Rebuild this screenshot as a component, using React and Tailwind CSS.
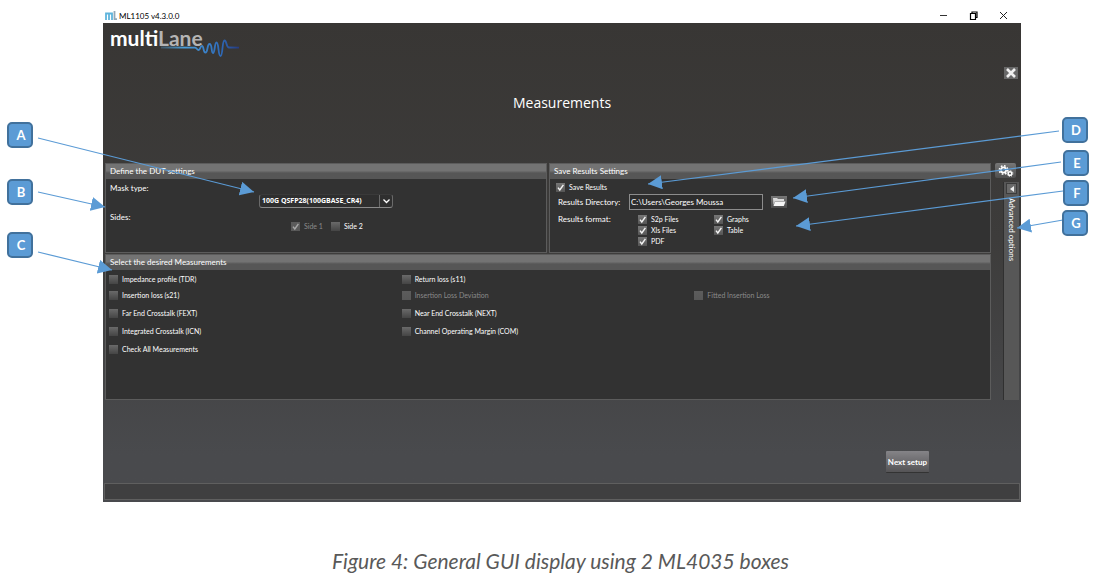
import React, { useState } from 'react';
import clsx from 'clsx';

const MEASUREMENTS = [
  { id: 'tdr', label: 'Impedance profile (TDR)', cell: 'col-start-1 row-start-1' },
  { id: 's21', label: 'Insertion loss (s21)', cell: 'col-start-1 row-start-2' },
  { id: 'fext', label: 'Far End Crosstalk (FEXT)', cell: 'col-start-1 row-start-3' },
  { id: 'icn', label: 'Integrated Crosstalk (ICN)', cell: 'col-start-1 row-start-4' },
  { id: 'all', label: 'Check All Measurements', cell: 'col-start-1 row-start-5' },
  { id: 's11', label: 'Return loss (s11)', cell: 'col-start-2 row-start-1' },
  { id: 'ild', label: 'Insertion Loss Deviation', cell: 'col-start-2 row-start-2', disabled: true },
  { id: 'next', label: 'Near End Crosstalk (NEXT)', cell: 'col-start-2 row-start-3' },
  { id: 'com', label: 'Channel Operating Margin (COM)', cell: 'col-start-2 row-start-4' },
  { id: 'fil', label: 'Fitted Insertion Loss', cell: 'col-start-3 row-start-2', disabled: true },
];

const FORMATS = ['S2p Files', 'Graphs', 'Xls Files', 'Table', 'PDF'];

const CALLOUTS = [
  { letter: 'A', place: 'left-[7px] top-[122px]', from: [38, 138], to: [254, 192] },
  { letter: 'B', place: 'left-[7px] top-[179px]', from: [38, 192], to: [105, 207] },
  { letter: 'C', place: 'left-[7px] top-[232px]', from: [38, 252], to: [112, 270] },
  { letter: 'D', place: 'right-[9px] top-[117px]', from: [1059, 131], to: [648, 184] },
  { letter: 'E', place: 'right-[8px] top-[150px]', from: [1061, 162], to: [793, 198] },
  { letter: 'F', place: 'right-[8px] top-[180px]', from: [1063, 191], to: [796, 226] },
  { letter: 'G', place: 'right-[9px] top-[210px]', from: [1063, 220], to: [1017, 228] },
];

function Check({ label, disabled, defaultChecked, className }) {
  return (
    <label className={clsx('flex items-center gap-1 text-[7px] leading-none whitespace-nowrap', disabled ? 'text-[#8a8a8a]' : 'text-white', className)}>
      <span className="relative flex">
        <input
          type="checkbox"
          disabled={disabled}
          defaultChecked={defaultChecked}
          className="peer size-[9px] appearance-none bg-linear-to-b from-[#6a6a6a] to-[#454545] checked:from-[#777777] checked:to-[#555555] disabled:from-[#5c5c5c] disabled:to-[#585858]"
        />
        <svg viewBox="0 0 9 9" className="pointer-events-none absolute inset-0 hidden size-[9px] peer-checked:block peer-disabled:opacity-50">
          <path d="M2 4.6 L3.8 7 L7.4 1.8" fill="none" stroke="#f4f4f4" strokeWidth="1.4" />
        </svg>
      </span>
      {label}
    </label>
  );
}

function Panel({ title, className, children }) {
  return (
    <section className={clsx('flex flex-col border border-[#5c5c5c] bg-[#323232]', className)}>
      <h2 className="h-[15px] bg-linear-to-b from-[#737373] from-45% to-[#565656] to-60% pl-1 text-[8px] leading-[15px] text-white">
        {title}
      </h2>
      {children}
    </section>
  );
}

function Logo() {
  return (
    <div className="relative w-[132px] text-[21px] leading-[20px] font-bold text-white">
      multi<span className="text-[#b4b4b4]">Lane</span>
      <svg viewBox="0 0 80 20" className="absolute top-[10px] left-[51px] h-5 w-20" fill="none">
        <defs>
          <linearGradient id="wave" gradientUnits="userSpaceOnUse" x1="0" x2="78" y1="0" y2="0">
            <stop offset="0" stopColor="#4c9bd0" stopOpacity="0.3" />
            <stop offset="0.3" stopColor="#4a9dd8" />
            <stop offset="0.75" stopColor="#2f6dbb" />
            <stop offset="1" stopColor="#263b80" />
          </linearGradient>
        </defs>
        <path
          d="M0 9.5 L34 9.6 C36 9.8 36 12 37.5 12 C39.5 12 39 8 41 8 C43 8 42 14.5 44.5 14.5 C47 14.5 46 6 48.5 6 C51.5 6 50 15 52 15 C54 15 53.5 4.5 55.5 4.5 C58 4.5 57 18 59.5 18 C62 18 61 2.5 63.5 2.5 C66 2.5 65 9.5 68 9.5 L78 9.7"
          stroke="url(#wave)"
          strokeWidth="1.8"
        />
      </svg>
    </div>
  );
}

function TitleBar() {
  return (
    <header className="flex h-[15px] items-center bg-white text-black">
      <svg viewBox="0 0 12 9" className="ml-[2px] h-[9px] w-3" fill="none" strokeWidth="1.8">
        <path d="M1 9 V2.5 H4 V9 M4 2.5 H7 V9" stroke="#5fb4dc" />
        <path d="M9.500 0 V8.200 H12" stroke="#93a8b8" />
      </svg>
      <h1 className="ml-[2px] text-[8px] leading-none">ML1105 v4.3.0.0</h1>
      <div className="ml-auto flex">
        <button aria-label="Minimize" className="flex h-[15px] w-[30px] items-center justify-center">
          <svg viewBox="0 0 9 9" className="size-[9px]"><path d="M1 4.5 H8" stroke="#333" /></svg>
        </button>
        <button aria-label="Restore" className="flex h-[15px] w-[30px] items-center justify-center">
          <svg viewBox="0 0 9 9" className="size-[9px]" fill="none" stroke="#000">
            <path d="M1.5 2.5 H6.5 V8.5 H1.5 Z M3 2.5 V1 H8 V6.5 H6.5" strokeWidth="1.2" />
          </svg>
        </button>
        <button aria-label="Close" className="mr-[3px] flex h-[15px] w-[30px] items-center justify-center">
          <svg viewBox="0 0 9 9" className="size-[9px]"><path d="M1 1 L8 8 M8 1 L1 8" stroke="#222" /></svg>
        </button>
      </div>
    </header>
  );
}

function DutPanel() {
  const [mask, setMask] = useState('100G QSFP28(100GBASE_CR4)');
  return (
    <Panel title="Define the DUT settings" className="flex-1">
      <div className="grid grid-cols-[149px_1fr] gap-y-1 pt-1 pl-1 text-[8px] leading-[10px] text-white">
        <label htmlFor="mask" className="h-[25px]">Mask type:</label>
        <div className="relative w-[134px] self-end">
          <select
            id="mask"
            value={mask}
            onChange={(e) => setMask(e.target.value)}
            className="block h-[14px] w-full appearance-none rounded-[3px] border border-t-[#3a3a3a] border-r-[#6a6a6a] border-b-[#8a8a8a] border-l-[#6a6a6a] bg-[#2f2f2f] pl-[2px] font-['Open_Sans',sans-serif] text-[7px] leading-[12px] font-bold text-white"
          >
            <option>100G QSFP28(100GBASE_CR4)</option>
          </select>
          <svg viewBox="0 0 14 14" className="pointer-events-none absolute top-0 right-0 size-[14px]" fill="none">
            <path d="M0.5 1 V13" stroke="#6a6a6a" />
            <path d="M4.5 5.5 L7.5 8.5 L10.5 5.5" stroke="#fff" strokeWidth="1.3" />
          </svg>
        </div>
        <span>Sides:</span>
        <div className="flex h-[19px] items-end gap-2 pl-8">
          <Check label="Side 1" disabled defaultChecked />
          <Check label="Side 2" />
        </div>
      </div>
    </Panel>
  );
}

function SavePanel() {
  return (
    <Panel title="Save Results Settings" className="flex-1">
      <div className="flex flex-col pt-[3px] pl-[6px] text-[8px] text-white">
        <Check label="Save Results" defaultChecked className="h-[11px]" />
        <div className="mt-px flex h-4 items-center">
          <label htmlFor="directory" className="w-[73px] pl-[2px]">Results Directory:</label>
          <input
            id="directory"
            defaultValue="C:\Users\Georges Moussa"
            className="h-4 w-[134px] border border-[#8c8c8c] bg-[#2d2d2d] px-px text-[8px] text-white"
          />
          <button aria-label="Browse" className="ml-2 flex h-3 w-4 items-center justify-center bg-linear-to-b from-[#777777] to-[#4c4c4c]">
            <svg viewBox="0 0 14 10" className="h-[10px] w-[14px]">
              <path d="M1 1 H5 L6 2 H12 V4 H3 L1.5 8 Z" fill="#d9d9d9" />
              <path d="M3 4.5 H13.5 L11.8 9 H1.5 Z" fill="#f5f5f5" />
            </svg>
          </button>
        </div>
        <div className="flex pt-1">
          <span className="w-[82px] pl-[2px] leading-[11px]">Results format:</span>
          <div className="grid auto-rows-[11px] grid-cols-[76px_76px]">
            {FORMATS.map((name) => (
              <Check key={name} label={name} defaultChecked />
            ))}
          </div>
        </div>
      </div>
    </Panel>
  );
}

function Sidebar() {
  return (
    <aside className="flex w-6 flex-col">
      <button aria-label="Settings" className="flex h-[15px] w-[21px] items-center justify-center rounded-[2px] bg-linear-to-b from-[#777777] to-[#4f4f4f]">
        <svg viewBox="0 0 16 12" className="h-3 w-4" fill="none" stroke="#fff">
          <circle cx="5.5" cy="5" r="2.6" strokeWidth="1.8" />
          <circle cx="5.5" cy="5" r="4.2" strokeWidth="1.5" strokeDasharray="1.7 1.6" />
          <circle cx="12" cy="8.5" r="1.8" strokeWidth="1.5" />
          <circle cx="12" cy="8.5" r="2.9" strokeWidth="0.9" strokeDasharray="1.1 1.18" />
        </svg>
      </button>
      <div className="mt-1 ml-2 flex w-4 flex-1 flex-col items-center border-l border-[#303030] bg-[#575757] pt-px">
        <button aria-label="Expand" className="flex h-[11px] w-[11px] items-center justify-center border border-[#3c3c3c] bg-[#6a6a6a]">
          <svg viewBox="0 0 6 8" className="h-2 w-[6px]"><path d="M5 1 V7 L1 4 Z" fill="#eee" /></svg>
        </button>
        <span className="mt-1 text-[8px] leading-[12px] text-white [writing-mode:vertical-rl]">Advanced options</span>
      </div>
    </aside>
  );
}

function Callouts() {
  return (
    <>
      <svg viewBox="0 0 1097 502" preserveAspectRatio="none" className="pointer-events-none absolute inset-0 size-full">
        <defs>
          <marker id="head" viewBox="0 0 14 14" refX="14" refY="7" markerWidth="14" markerHeight="14" markerUnits="userSpaceOnUse" orient="auto">
            <path d="M0 0 L14 7 L0 14 Z" fill="#5b9bd5" />
          </marker>
        </defs>
        {CALLOUTS.map(({ letter, from, to }) => (
          <line key={letter} x1={from[0]} y1={from[1]} x2={to[0]} y2={to[1]} stroke="#5b9bd5" strokeWidth="1.2" markerEnd="url(#head)" />
        ))}
      </svg>
      {CALLOUTS.map(({ letter, place }) => (
        <span
          key={letter}
          className={clsx('absolute flex size-[26px] items-center justify-center rounded-[5px] border-2 border-[#41719c] bg-[#5b9bd5] pl-[2px] text-[13px] leading-none font-bold text-white', place)}
        >
          {letter}
        </span>
      ))}
    </>
  );
}

export default function App() {
  return (
    <figure className="min-h-screen bg-white font-[Lato,sans-serif]">
      <div className="relative pt-2 pr-[76px] pl-[103px]">
        <TitleBar />
        <div className="flex flex-col bg-linear-to-b from-[#383634] via-[#3d3c3b] via-45% to-[#494a4d] to-90%">
          <div className="h-11 pt-[5px] pl-[7px]">
            <Logo />
          </div>
          <div className="flex justify-end pr-[3px]">
            <button aria-label="Close measurements" className="flex h-3 w-[14px] items-center justify-center bg-[#686868]">
              <svg viewBox="0 0 12 10" className="h-[10px] w-3">
                <path d="M2 1 L10 9 M10 1 L2 9" stroke="#f0f0f0" strokeWidth="2.6" />
              </svg>
            </button>
          </div>
          <h2 className="mt-[14px] mb-[50px] text-center font-['Open_Sans',sans-serif] text-[14px] leading-5 text-white">Measurements</h2>

          <main className="flex gap-1 pr-[2px] pl-[2px]">
            <div className="flex flex-1 flex-col gap-px">
              <div className="flex h-[90px] gap-[2px]">
                <DutPanel />
                <SavePanel />
              </div>
              <Panel title="Select the desired Measurements" className="h-[146px]">
                <div className="grid grid-cols-3 grid-rows-[16px_16px_20px_17px_19px] px-[3px] pt-px">
                  {MEASUREMENTS.map(({ id, label, cell, disabled }) => (
                    <Check key={id} label={label} disabled={disabled} className={cell} />
                  ))}
                </div>
              </Panel>
            </div>
            <Sidebar />
          </main>

          <div className="flex justify-end pt-[51px] pr-[92px] pb-[10px]">
            <button className="h-[22px] rounded-[1px] border-b border-[#333333] bg-linear-to-b from-[#858488] to-[#555456] px-[2px] text-[8px] font-bold text-white">
              Next setup
            </button>
          </div>
          <footer className="mx-px mb-[2px] h-[17px] border border-[#5f5f5f] bg-[#3f3f40]" />
        </div>
        <Callouts />
      </div>
      <figcaption className="mt-[47px] pl-6 text-center text-[21px] leading-6 text-[#595959] italic">
        Figure 4: General GUI display using 2 ML4035 boxes
      </figcaption>
    </figure>
  );
}
